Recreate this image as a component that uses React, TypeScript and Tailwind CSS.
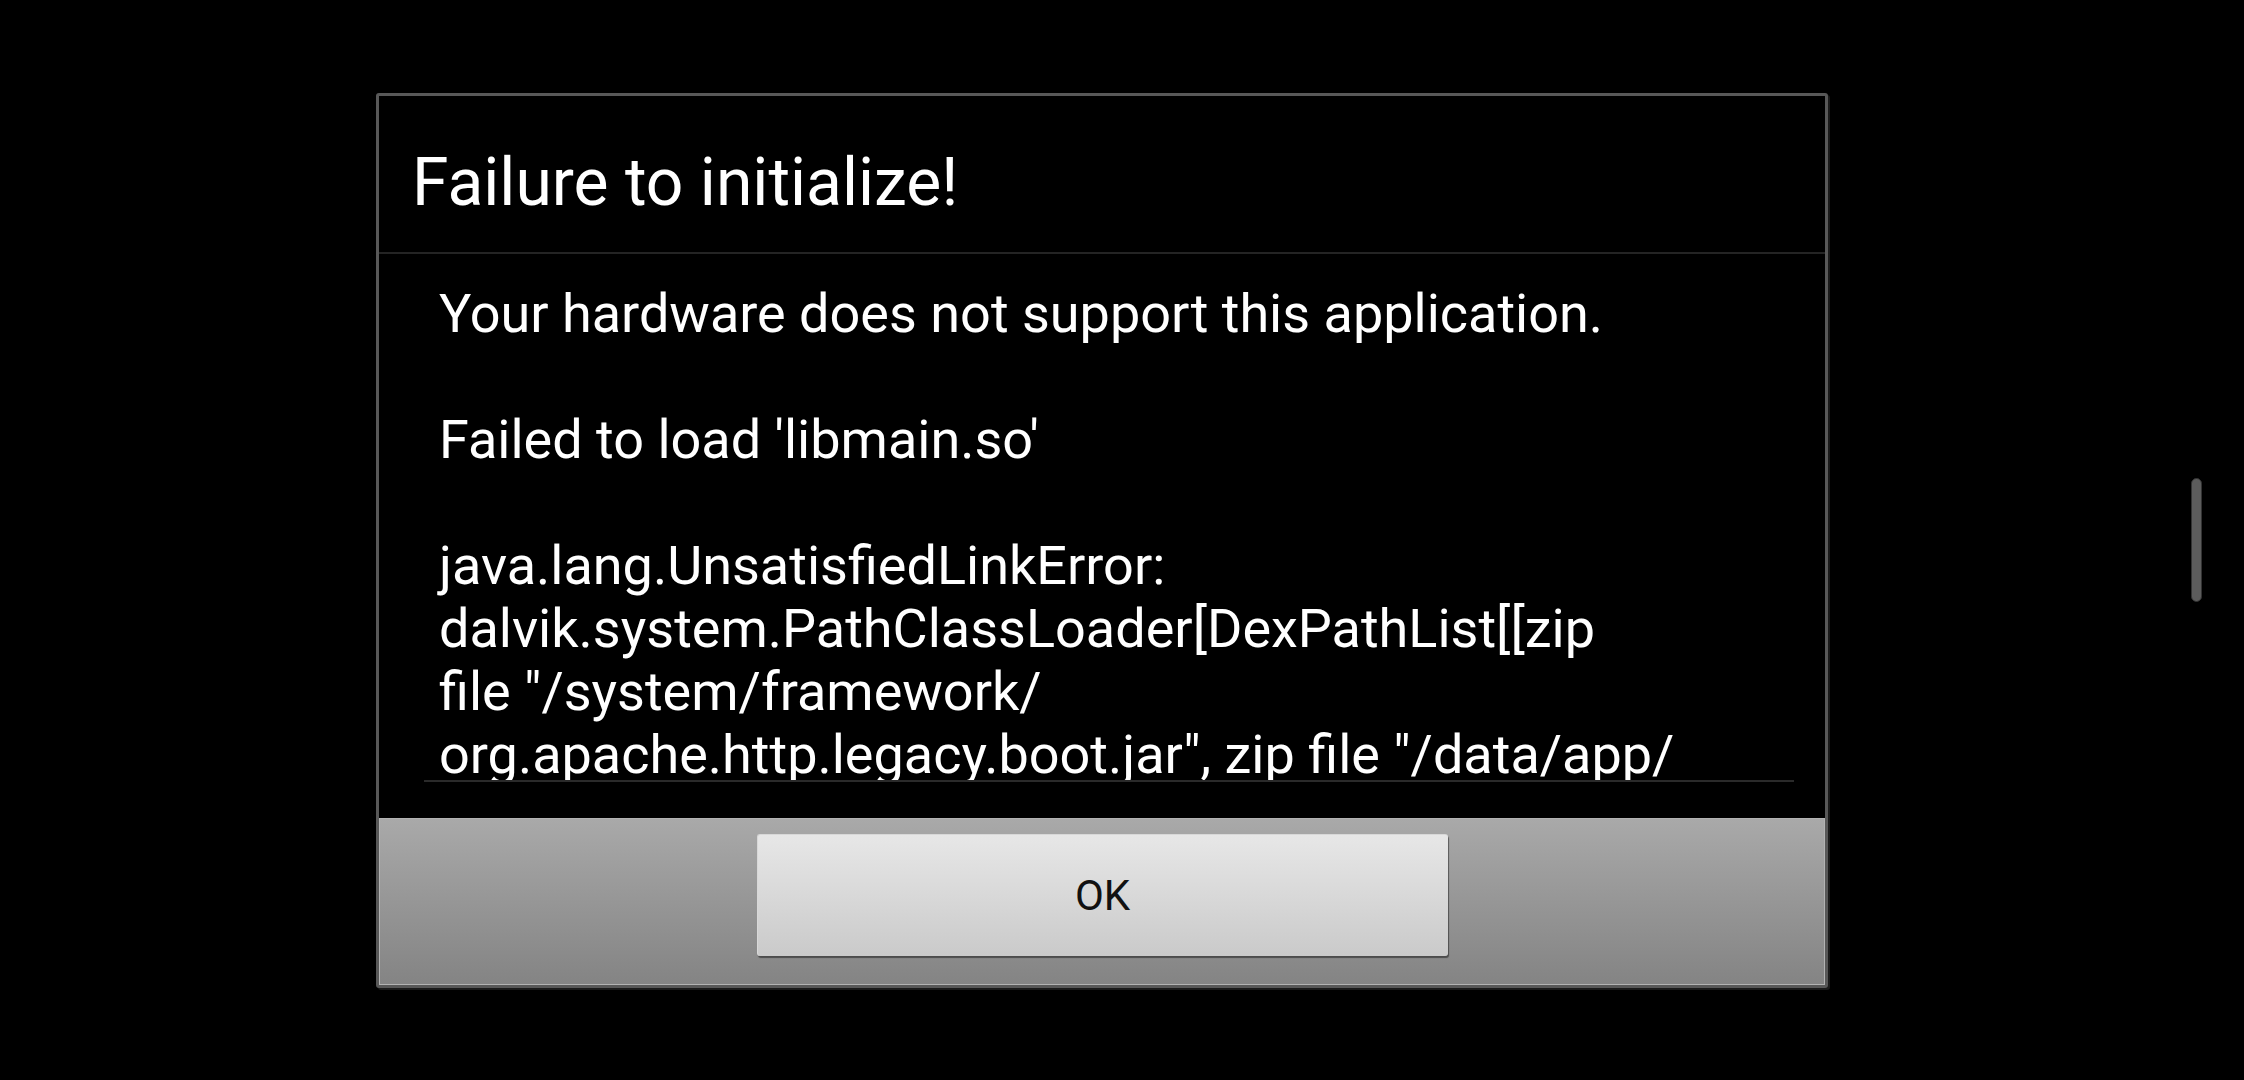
const lines = [
  "Your hardware does not support this application.",
  "",
  "Failed to load 'libmain.so'",
  "",
  "java.lang.UnsatisfiedLinkError:",
  "dalvik.system.PathClassLoader[DexPathList[[zip",
  'file "/system/framework/',
  'org.apache.http.legacy.boot.jar", zip file "/data/app/',
];

export default function App() {
  return (
    <div className="relative w-[2244px] h-[1080px] bg-black pl-[376px] pt-[93px] font-['Roboto',sans-serif] text-white overflow-hidden">
      {/* dialog */}
      <div className="flex flex-col w-[1452px] h-[895px] border-[3px] border-[#585858] rounded-[3px] bg-black shadow-[2px_2px_0_#1a1a1a]">
        {/* title */}
        <div className="h-[156px] pl-[33px] pt-[48px] shrink-0">
          <h1 className="text-[66px] leading-[77px] font-normal">Failure to initialize!</h1>
        </div>
        <div className="h-[2px] bg-[#242424] shrink-0" />

        {/* message */}
        <div className="ml-[45px] mr-[31px] h-[528px] shrink-0 overflow-hidden border-b-2 border-[#2a2a2a] pt-[28px] pl-[15px]">
          {lines.map((line, i) => (
            <div key={i} className="h-[63px] text-[54px] leading-[63px] whitespace-nowrap">
              {line}
            </div>
          ))}
        </div>

        <div className="h-[36px] shrink-0" />

        {/* button bar */}
        <div className="flex-1 flex justify-center items-start pt-[15px] border border-[#b3b3b3] bg-gradient-to-b from-[#a9a9a9] to-[#848484]">
          <button className="w-[691px] h-[122px] rounded-[3px] bg-gradient-to-b from-[#e7e7e7] to-[#cacaca] border-t border-l border-[#d8d8d8] shadow-[1px_2px_1px_rgba(0,0,0,0.45)] text-[42px] text-[#111] leading-none">
            OK
          </button>
        </div>
      </div>

      {/* scroll indicator */}
      <div className="absolute left-[2191px] top-[478px] w-[11px] h-[124px] rounded-full bg-[#5c5c5c] border border-[#333]" />
    </div>
  );
}
